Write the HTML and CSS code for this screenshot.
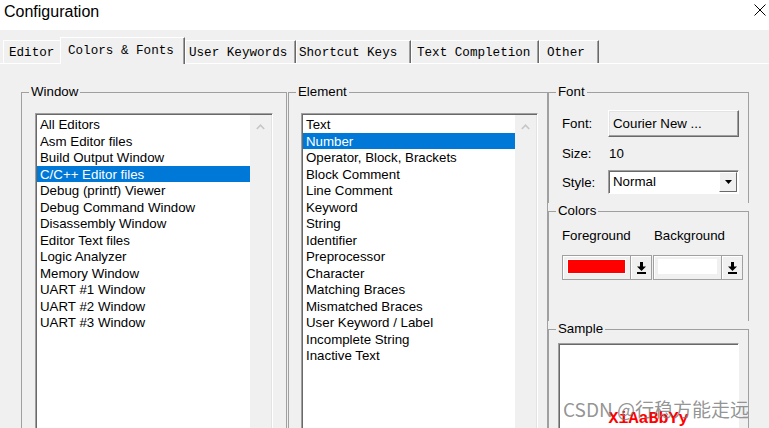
FILE: index.html
```html
<!DOCTYPE html>
<html lang="en">
<head>
    <meta charset="UTF-8">
    <title>Configuration</title>
    <link rel="stylesheet" href="styles.css">
</head>
<body>
    <div class="dialog">
        <div class="titlebar">
            <span class="title">Configuration</span>
            <svg class="close" width="12" height="12" viewBox="0 0 12 12"><path d="M0.5 0.5 L11.5 11.5 M11.5 0.5 L0.5 11.5" stroke="#000" stroke-width="1"/></svg>
        </div>

        <div class="tabs">
            <div class="tab tab-editor">Editor</div>
            <div class="tab tab-colors active">Colors &amp; Fonts</div>
            <div class="tab tab-user">User Keywords</div>
            <div class="tab tab-shortcut">Shortcut Keys</div>
            <div class="tab tab-completion">Text Completion</div>
            <div class="tab tab-other">Other</div>
        </div>

        <div class="panel">
            <fieldset class="group group-window">
                <legend>Window</legend>
                <div class="listbox listbox-window">
                    <div class="items">
                        <div class="item">All Editors</div>
                        <div class="item">Asm Editor files</div>
                        <div class="item">Build Output Window</div>
                        <div class="item selected">C/C++ Editor files</div>
                        <div class="item">Debug (printf) Viewer</div>
                        <div class="item">Debug Command Window</div>
                        <div class="item">Disassembly Window</div>
                        <div class="item">Editor Text files</div>
                        <div class="item">Logic Analyzer</div>
                        <div class="item">Memory Window</div>
                        <div class="item">UART #1 Window</div>
                        <div class="item">UART #2 Window</div>
                        <div class="item">UART #3 Window</div>
                    </div>
                    <div class="scrollbar">
                        <svg width="9" height="6" viewBox="0 0 9 6"><path d="M0.8 5 L4.5 1.2 L8.2 5" fill="none" stroke="#c6c6c6" stroke-width="1.6"/></svg>
                    </div>
                </div>
            </fieldset>

            <fieldset class="group group-element">
                <legend>Element</legend>
                <div class="listbox listbox-element">
                    <div class="items">
                        <div class="item">Text</div>
                        <div class="item selected">Number</div>
                        <div class="item">Operator, Block, Brackets</div>
                        <div class="item">Block Comment</div>
                        <div class="item">Line Comment</div>
                        <div class="item">Keyword</div>
                        <div class="item">String</div>
                        <div class="item">Identifier</div>
                        <div class="item">Preprocessor</div>
                        <div class="item">Character</div>
                        <div class="item">Matching Braces</div>
                        <div class="item">Mismatched Braces</div>
                        <div class="item">User Keyword / Label</div>
                        <div class="item">Incomplete String</div>
                        <div class="item">Inactive Text</div>
                    </div>
                    <div class="scrollbar">
                        <svg width="9" height="6" viewBox="0 0 9 6"><path d="M0.8 5 L4.5 1.2 L8.2 5" fill="none" stroke="#c6c6c6" stroke-width="1.6"/></svg>
                    </div>
                </div>
            </fieldset>

            <div class="side">
                <fieldset class="group group-font">
                    <legend>Font</legend>
                    <div class="font-body">
                        <div class="field field-font">
                            <span class="field-label">Font:</span>
                            <button class="btn-font">Courier New ...</button>
                        </div>
                        <div class="field field-size">
                            <span class="field-label">Size:</span>
                            <span class="size-value">10</span>
                        </div>
                        <div class="field field-style">
                            <span class="field-label">Style:</span>
                            <div class="combo">
                                <span class="combo-text">Normal</span>
                                <span class="combo-btn">
                                    <svg width="7" height="4" viewBox="0 0 7 4"><path d="M0 0 H7 L3.5 4 Z" fill="#000"/></svg>
                                </span>
                            </div>
                        </div>
                    </div>
                </fieldset>

                <fieldset class="group group-colors">
                    <legend>Colors</legend>
                    <div class="colors-body">
                        <div class="color-labels">
                            <span class="color-label">Foreground</span>
                            <span class="color-label">Background</span>
                        </div>
                        <div class="pickers">
                            <div class="picker">
                                <span class="swatch swatch-red"></span>
                                <span class="picker-btn">
                                    <svg width="9" height="12" viewBox="0 0 9 12"><rect x="3" y="0" width="3" height="5" fill="#000"/><path d="M0 4.5 H9 L4.5 9 Z" fill="#000"/><rect x="0" y="10" width="9" height="2" fill="#000"/></svg>
                                </span>
                            </div>
                            <div class="picker">
                                <span class="swatch swatch-white"></span>
                                <span class="picker-btn">
                                    <svg width="9" height="12" viewBox="0 0 9 12"><rect x="3" y="0" width="3" height="5" fill="#000"/><path d="M0 4.5 H9 L4.5 9 Z" fill="#000"/><rect x="0" y="10" width="9" height="2" fill="#000"/></svg>
                                </span>
                            </div>
                        </div>
                    </div>
                </fieldset>

                <fieldset class="group group-sample">
                    <legend>Sample</legend>
                    <div class="sample">
                        <span class="sample-text">XiAaBbYy</span>
                    </div>
                </fieldset>
            </div>
        </div>

        <div class="watermark">CSDN @行稳方能走远</div>
    </div>
</body>
</html>
```

FILE: styles.css
```css
body {
    margin: 0;
    width: 769px;
    height: 428px;
    overflow: hidden;
    background-color: #f0f0f0;
    font-family: "Liberation Sans", Arial, sans-serif;
    font-size: 13.3px;
    color: #000;
}
.dialog {
    position: relative;
    height: 428px;
    overflow: hidden;
}

/* title bar */
.titlebar {
    height: 30px;
    box-sizing: border-box;
    padding: 3px 3px 0 4px;
    background-color: #fff;
    display: flex;
    justify-content: space-between;
    align-items: flex-start;
}
.title {
    font-size: 16px;
    line-height: 18px;
}
.close {
    margin-top: 1px;
}

/* tabs */
.tabs {
    height: 34px;
    box-sizing: border-box;
    padding-left: 3px;
    border-bottom: 1px solid #fff;
    display: flex;
    align-items: flex-end;
}
.tab {
    height: 23px;
    box-sizing: border-box;
    padding: 2px 0 0 5px;
    border-top: 1px solid #fff;
    border-left: 1px solid #fff;
    border-right: 1px solid #696969;
    box-shadow: inset -1px 0 0 #a0a0a0;
    font-family: "Liberation Mono", "Courier New", monospace;
    font-size: 12.6px;
    line-height: 20px;
    white-space: nowrap;
}
.tab.active {
    height: 27px;
    margin-bottom: -1px;
    padding: 2px 0 0 7px;
    line-height: 22px;
    background-color: #f0f0f0;
}
.tab-editor {
    width: 57px;
    border-right: none;
    box-shadow: none;
}
.tab-colors { width: 125px; }
.tab-user { width: 111px; padding-left: 3px; }
.tab-shortcut { width: 115px; padding-left: 2px; }
.tab-completion { width: 128px; }
.tab-other { width: 60px; padding-left: 7px; }

/* panel with group boxes */
.panel {
    display: flex;
    align-items: flex-start;
    padding: 20px 0 0 21px;
}
.group {
    margin: 0;
    padding: 0;
    min-width: 0;
    box-sizing: border-box;
    border: 1px solid #a0a0a0;
}
.group legend {
    margin-left: 7px;
    padding: 0 2px;
    line-height: 16px;
}
.group-window {
    width: 266px;
    height: 360px;
}
.group-element {
    width: 260px;
    height: 360px;
    margin-left: 1px;
}
.side {
    width: 201px;
}
.side .group {
    width: 100%;
}
.group-font {
    height: 119px;
    border-bottom: none;
}
.group-colors {
    height: 118px;
    border-bottom: none;
}
.group-sample {
    height: 200px;
}

/* list boxes */
.listbox {
    display: flex;
    height: 330px;
    box-sizing: border-box;
    margin-top: 13px;
    padding: 1px;
    border: 1px solid;
    border-color: #a0a0a0 #fff #fff #a0a0a0;
    box-shadow: inset 1px 1px 0 #696969, inset -1px -1px 0 #e3e3e3;
}
.listbox-window {
    width: 238px;
    margin-left: 13px;
}
.listbox-element {
    width: 237px;
    margin-left: 12px;
}
.items {
    flex: 1;
    background-color: #fff;
    padding-top: 1px;
}
.item {
    height: 16.5px;
    line-height: 17px;
    padding-left: 3px;
    white-space: nowrap;
}
.item.selected {
    background-color: #0078d7;
    color: #fff;
}
.scrollbar {
    width: 21px;
    padding-top: 9px;
    background-color: #f0f0f0;
    display: flex;
    justify-content: center;
    align-items: flex-start;
}

/* font group */
.font-body {
    padding: 10px 0 0 13px;
}
.field {
    display: flex;
    align-items: center;
}
.field-label {
    width: 46px;
}
.btn-font {
    width: 131px;
    height: 27px;
    padding: 0 0 0 4px;
    text-align: left;
    font: inherit;
    color: #000;
    background-color: #f0f0f0;
    border: 1px solid;
    border-color: #fff #696969 #696969 #fff;
    box-shadow: inset -1px -1px 0 #a0a0a0, inset 1px 1px 0 #e3e3e3;
}
.field-size {
    height: 28px;
    margin-top: 2px;
}
.size-value {
    padding-left: 1px;
}
.field-style {
    margin-top: 3px;
}
.combo {
    width: 131px;
    height: 24px;
    box-sizing: border-box;
    padding: 1px;
    display: flex;
    background-color: #fff;
    border: 1px solid;
    border-color: #a0a0a0 #fff #fff #a0a0a0;
    box-shadow: inset 1px 1px 0 #696969;
}
.combo-text {
    flex: 1;
    padding-left: 3px;
    line-height: 20px;
}
.combo-btn {
    width: 18px;
    box-sizing: border-box;
    background-color: #f0f0f0;
    border: 1px solid;
    border-color: #fff #696969 #696969 #fff;
    display: flex;
    align-items: center;
    justify-content: center;
}

/* colors group */
.colors-body {
    padding: 9px 0 0 13px;
}
.color-labels {
    display: flex;
    height: 16px;
    line-height: 16px;
}
.color-label {
    width: 92px;
}
.pickers {
    display: flex;
    gap: 1px;
    margin-top: 11px;
}
.picker {
    width: 90px;
    height: 25px;
    box-sizing: border-box;
    display: flex;
    border: 1px solid #a0a0a0;
    box-shadow: inset 1px 1px 0 #fff;
    background-color: #f0f0f0;
}
.swatch {
    width: 57px;
    height: 13px;
    margin: 3px 4px 0 4px;
    border: 1px solid #fff;
}
.swatch-red {
    background-color: #f00;
}
.swatch-white {
    background-color: #fff;
}
.picker-btn {
    width: 20px;
    border-left: 1px solid #a0a0a0;
    box-shadow: inset 1px 1px 0 #fff;
    display: flex;
    align-items: center;
    justify-content: center;
}

/* sample group */
.sample {
    width: 181px;
    height: 170px;
    box-sizing: border-box;
    margin: 6px 0 0 9px;
    padding-top: 65px;
    background-color: #fff;
    border: 1px solid;
    border-color: #a0a0a0 #fff #fff #a0a0a0;
    box-shadow: inset 1px 1px 0 #696969;
    text-align: center;
}
.sample-text {
    font-family: "Liberation Mono", "Courier New", monospace;
    font-weight: bold;
    font-size: 16.7px;
    line-height: 20px;
    color: #f00;
}

.watermark {
    position: absolute;
    left: 563px;
    top: 399px;
    font-family: "Noto Sans CJK SC", sans-serif;
    font-size: 19px;
    line-height: 1;
    color: rgba(120, 120, 120, 0.8);
    white-space: nowrap;
}
```
